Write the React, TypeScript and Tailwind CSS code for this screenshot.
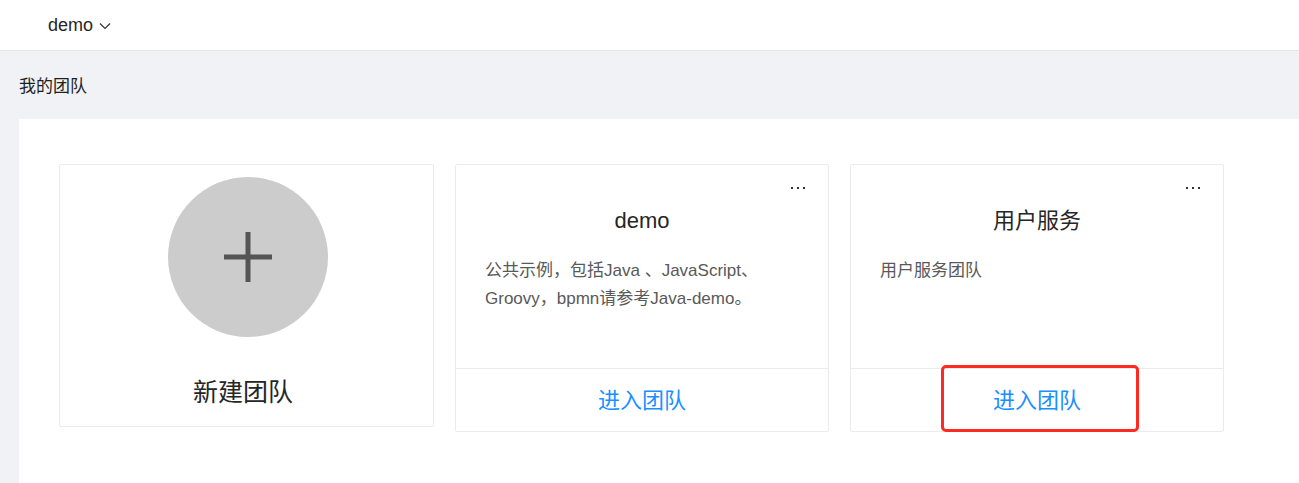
const font = { fontFamily: '"Liberation Sans", "Noto Sans CJK SC", sans-serif' };

interface Team {
  name: string;
  desc: string[];
  highlight?: boolean;
}

const teams: Team[] = [
  { name: 'demo', desc: ['公共示例，包括Java 、JavaScript、', 'Groovy，bpmn请参考Java-demo。'] },
  { name: '用户服务', desc: ['用户服务团队'], highlight: true },
];

function Dots() {
  return (
    <div className="absolute top-[22px] right-[23px] flex gap-[4px]">
      <span className="w-[2px] h-[2px] bg-[#333]" />
      <span className="w-[2px] h-[2px] bg-[#333]" />
      <span className="w-[2px] h-[2px] bg-[#333]" />
    </div>
  );
}

function TeamCard({ team }: { team: Team }) {
  return (
    <div className="relative w-[374px] border border-[#ebebeb] rounded-[2px] bg-white flex flex-col">
      <div className="relative h-[203px] px-[29px] pt-[40px]">
        <Dots />
        <h3 className="text-center text-[22px] leading-[32px] text-[#262626]">{team.name}</h3>
        <div className="mt-[20px] text-[17px] leading-[28px] text-[#595959]">
          {team.desc.map((line) => (
            <p key={line} className="whitespace-nowrap">{line}</p>
          ))}
        </div>
      </div>
      <div className="relative h-[63px] border-t border-[#ebebeb] flex items-center justify-center">
        <span className="text-[22px] text-[#1890ff]">进入团队</span>
        {team.highlight && (
          <div className="absolute left-[90px] top-[-4px] w-[198px] h-[67px] border-[3px] border-[#ff2a1f] rounded-[5px]" />
        )}
      </div>
    </div>
  );
}

export default function App() {
  return (
    <div className="w-[1299px] h-[483px] overflow-hidden bg-[#f0f2f5] flex flex-col" style={font}>
      <header className="h-[51px] shrink-0 bg-white border-b border-[#e6e6e6] flex items-center pl-[48px]">
        <span className="text-[18px] text-[#262626]">demo</span>
        <svg className="ml-[6px] mt-[2px]" width="12" height="8" viewBox="0 0 12 8" fill="none">
          <path d="M1 1.5 L6 6.5 L11 1.5" stroke="#333" strokeWidth="1.2" />
        </svg>
      </header>
      <div className="h-[68px] shrink-0 flex items-center pl-[19px] pt-[4px]">
        <span className="text-[17px] text-[#1f1f1f]">我的团队</span>
      </div>
      <main className="flex-1 ml-[19px] bg-white pl-[40px] pt-[45px]">
        <div className="flex items-start gap-[21px]">
          <div className="w-[375px] h-[263px] border border-[#ebebeb] rounded-[2px] flex flex-col items-center pt-[12px]">
            <div className="w-[160px] h-[160px] rounded-full bg-[#cccccc] flex items-center justify-center ml-[2px]">
              <svg width="50" height="50" viewBox="0 0 50 50">
                <rect x="1" y="22.5" width="48" height="5" fill="#555" />
                <rect x="22.5" y="0" width="5" height="50" fill="#555" />
              </svg>
            </div>
            <span className="mt-[37px] mr-[7px] text-[25px] leading-[36px] text-[#262626]">新建团队</span>
          </div>
          {teams.map((t) => (
            <TeamCard key={t.name} team={t} />
          ))}
        </div>
      </main>
    </div>
  );
}
